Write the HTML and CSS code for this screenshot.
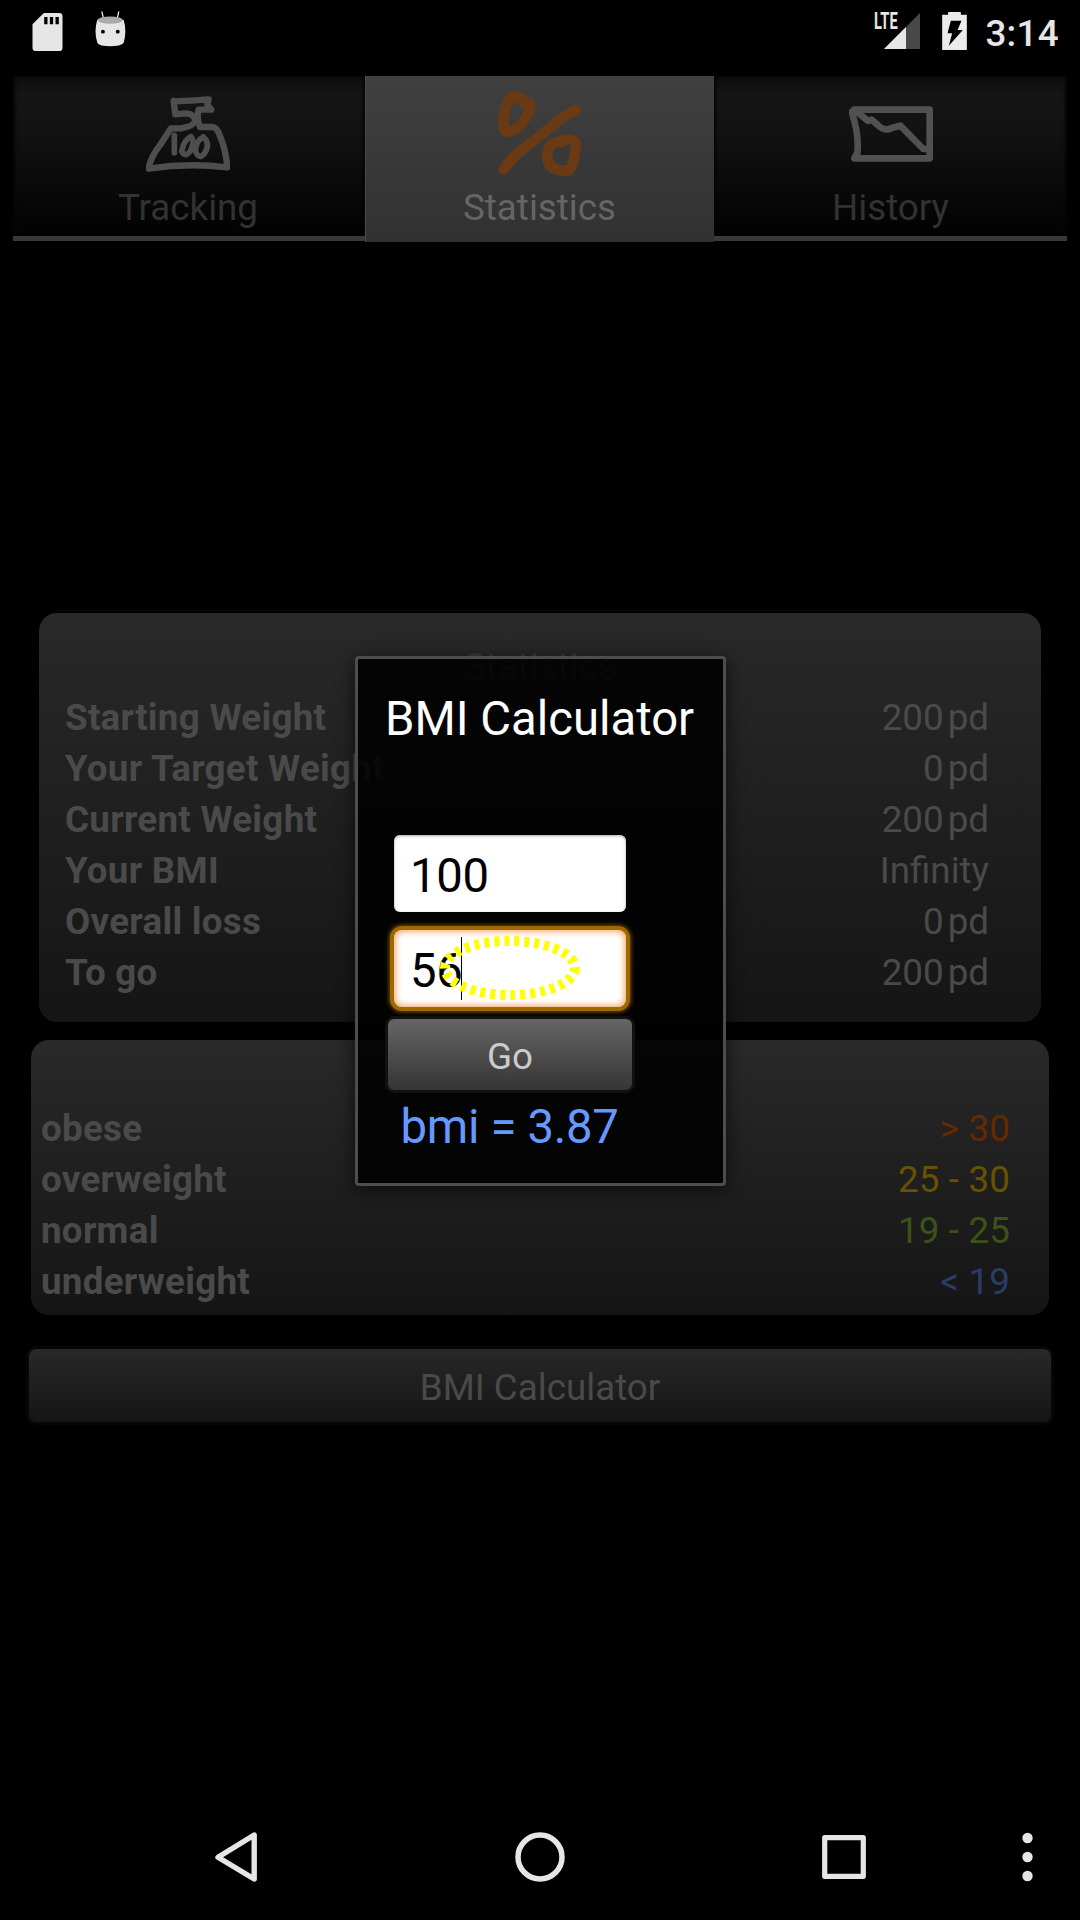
FILE: index.html
```html
<!DOCTYPE html>
<html lang="en">
<head>
<meta charset="utf-8">
<title>Statistics</title>
<link rel="stylesheet" href="styles.css">
</head>
<body>
<div class="screen">
  <header class="status-bar">
    <svg class="sd-icon" viewBox="0 0 90 114"><path fill="#e6e6e6" fill-rule="evenodd" d="M34 0H80Q90 0 90 10V104Q90 114 80 114H10Q0 114 0 104V34ZM35 12V34H45V12ZM52 12V34H62V12ZM69 12V34H79V12Z"/></svg>
    <svg class="droid-icon" viewBox="0 0 94 108"><path d="M21 2 26 24M72 2 67 24" stroke="#e6e6e6" stroke-width="4" stroke-linecap="round"/><path fill="#e6e6e6" d="M7 26Q46 40 87 26Q97 62 87 96Q84 101 72 104Q46 109 20 104Q9 101 7 96Q-4 60 7 26Z"/><ellipse cx="46" cy="27" rx="38" ry="11" fill="#aaa"/><circle cx="24" cy="62" r="6"/><circle cx="69" cy="62" r="6"/></svg>
    <span class="spacer"></span>
    <span class="signal"><svg viewBox="0 0 108 108"><path fill="#484848" d="M108 0V108H0Z"/><path fill="#e6e6e6" d="M66 42V108H0Z"/></svg><b class="lte">LTE</b></span>
    <svg class="battery" viewBox="0 0 74 114"><path fill="#ebebeb" d="M18 0H56V8H74V114H0V8H18Z"/><path d="M26 26H58L46 54H62L20 101 30 64H16Z"/></svg>
    <span class="clock">3:14</span>
  </header>

  <nav class="tabs">
    <div class="tab">
      <svg class="tab-icon" viewBox="0 0 252 252"><g fill="none" stroke="#4e4e4e" stroke-width="19" stroke-linecap="round" stroke-linejoin="round"><path d="M83 28Q135 27 188 22L184 38 196 53H158Q151 78 162 105H199Q213 105 221 130Q239 170 244 226Q125 212 8 230Q12 198 43 158Q60 132 75 109H104Q142 103 148 87Q145 65 118 64L88 67 83 27"/><path stroke-width="17" d="M85 130V182M135 134Q114 143 107 178Q117 198 132 178Q149 150 135 134M172 135Q151 144 148 177Q161 208 178 180Q193 154 172 135"/></g></svg>
      <span>Tracking</span>
    </div>
    <div class="tab selected">
      <svg class="tab-icon" viewBox="0 0 252 252"><path fill="none" stroke="#693a13" stroke-width="32" stroke-linecap="round" stroke-linejoin="round" d="M49 14Q31 14 22 54Q9 90 21 115Q32 125 50 113Q71 103 86 70Q105 38 91 33Q79 38 76 28Q67 15 49 14ZM17 232Q34 203 79 168L151 112Q190 74 234 54M207 143Q241 139 231 179Q228 216 213 235Q192 237 179 233Q144 224 148 181Q158 145 189 151Q195 139 207 143Z"/></svg>
      <span>Statistics</span>
    </div>
    <div class="tab">
      <svg class="tab-icon" viewBox="0 0 252 252"><path fill="none" stroke="#515151" stroke-width="20" stroke-linecap="round" stroke-linejoin="round" d="M16 53H242V199H16L25 183Q31 129 8 60L18 53 33 67 57 87 68 83 93 105Q109 118 128 108L154 101 223 171H239"/></svg>
      <span>History</span>
    </div>
  </nav>

  <main class="content">
    <section class="panel stats">
      <h2>Statistics</h2>
      <div class="row"><b>Starting Weight</b><span class="value">200<i>pd</i></span></div>
      <div class="row"><b>Your Target Weight</b><span class="value">0<i>pd</i></span></div>
      <div class="row"><b>Current Weight</b><span class="value">200<i>pd</i></span></div>
      <div class="row"><b>Your BMI</b><span class="value">Infinity</span></div>
      <div class="row"><b>Overall loss</b><span class="value">0<i>pd</i></span></div>
      <div class="row"><b>To go</b><span class="value">200<i>pd</i></span></div>
    </section>
    <section class="panel ranges">
      <div class="row"><b>obese</b><span class="obese">&gt; 30</span></div>
      <div class="row"><b>overweight</b><span class="over">25 - 30</span></div>
      <div class="row"><b>normal</b><span class="normal">19 - 25</span></div>
      <div class="row"><b>underweight</b><span class="under">&lt; 19</span></div>
    </section>
    <div class="wide-button">BMI Calculator</div>
  </main>

  <footer class="nav-bar">
    <svg class="nav-icons" viewBox="0 0 1080 120" fill="none" stroke="#e6e6e6" stroke-linejoin="round"><path stroke-width="5.4" d="M254.200 35V79L218 57.300Z"/><circle cx="540" cy="57" r="22" stroke-width="5.500"/><rect x="824.700" y="37.700" width="38.600" height="38.600" stroke-width="5.200"/><g fill="#e6e6e6" stroke="none"><circle cx="1027.500" cy="38" r="5.200"/><circle cx="1027.500" cy="57" r="5.200"/><circle cx="1027.500" cy="76" r="5.200"/></g></svg>
  </footer>

  <div class="dialog">
    <h1>BMI Calculator</h1>
    <div class="form">
      <div class="field">100</div>
      <div class="field focused">56<span class="caret"></span>
        <svg class="marker" viewBox="0 0 140 64"><ellipse cx="70" cy="32" rx="65" ry="27" fill="none" stroke="#ff0" stroke-width="10" stroke-dasharray="5 5"/></svg>
      </div>
      <div class="go">Go</div>
      <div class="result">bmi = 3.87</div>
    </div>
  </div>
</div>
</body>
</html>
```
FILE: styles.css
```css
* { box-sizing: border-box; }
body { margin: 0; background: #000; }
.screen {
  position: relative;
  display: flex;
  flex-direction: column;
  width: 1080px;
  height: 1920px;
  overflow: hidden;
  background: #000;
  font-family: Roboto, sans-serif;
  font-size: 36.75px;
  color: #4a4a4a;
}

/* Status bar */
.status-bar { display: flex; align-items: flex-start; height: 76px; padding: 11px 21px 0 32px; }
.sd-icon { width: 31px; height: 38px; margin-top: 2px; }
.droid-icon { width: 31px; height: 36px; margin-left: 32px; }
.spacer { flex: 1; }
.signal { position: relative; width: 36px; height: 36px; margin: 2px 22px 0 0; }
.signal svg { display: block; width: 36px; height: 36px; }
.lte {
  position: absolute;
  left: -10px;
  top: -1px;
  font-size: 23px;
  line-height: 20px;
  color: #e6e6e6;
  transform: scaleX(.64);
  transform-origin: 0 0;
}
.battery { width: 25px; height: 38px; margin-top: 1px; }
.clock { margin-left: 18px; font-weight: 500; line-height: 45px; letter-spacing: .3px; color: #e6e6e6; }

/* Tabs */
.tabs {
  display: grid;
  grid-template-columns: 352px 349px 353px;
  height: 166px;
  margin: 0 13px;
  background: linear-gradient(#393939, #393939) 0 160px / 100% 5px no-repeat;
}
.tab {
  display: flex;
  flex-direction: column;
  align-items: center;
  height: 160px;
  padding-top: 16px;
  background: linear-gradient(#0b0b0b, #151515 10%, #121212 35%, #020202);
  box-shadow: inset 3px 0 3px -1px #050505, inset -3px 0 3px -1px #050505;
  color: #323232;
}
.tab:first-child { padding-right: 2px; }
.tab.selected { height: 166px; background: linear-gradient(#404040, #313131); box-shadow: inset 1px 0 #4a4a4a; color: #656565; }
.tab-icon { width: 84px; height: 84px; }
.tab span { margin-top: 10px; line-height: 43px; }

/* Panels */
.content { display: flex; flex-direction: column; align-items: center; flex: 1; padding-top: 371px; }
.panel { border-radius: 18px; background: linear-gradient(#292929, #151515); line-height: 51px; }
.stats { width: 1002px; height: 409px; padding: 28px 52px 0 26px; }
.stats h2 { margin: 0 0 0 27px; font-size: inherit; font-weight: 400; text-align: center; color: #3a3a3a; }
.row { display: flex; justify-content: space-between; height: 51px; }
.row b { letter-spacing: .27px; }
.value i { margin-left: 4px; font-style: normal; }
.ranges { width: 1018px; height: 275px; margin-top: 18px; padding: 63px 39px 0 10px; }
.ranges span { letter-spacing: .15px; }
.obese { color: #662900; }
.over { color: #665200; }
.normal { color: #3d5217; }
.under { color: #293d66; }
.wide-button {
  width: 1022px;
  height: 73px;
  margin-top: 34px;
  border-radius: 7px;
  background: linear-gradient(#282828, #151515);
  box-shadow: 0 0 0 3px #060606;
  line-height: 78px;
  text-align: center;
}

/* Navigation */
.nav-bar { height: 120px; }
.nav-icons { display: block; width: 1080px; height: 120px; }

/* Dialog */
.dialog {
  position: absolute;
  left: 355px;
  top: 656px;
  width: 371px;
  height: 530px;
  padding: 33px 26px 0 27px;
  border: 3px solid #4d4d4d;
  border-radius: 4px;
  background: rgba(0, 0, 0, .88);
  box-shadow: 0 4px 18px rgba(0, 0, 0, .65);
}
.dialog h1 { margin: 0; font-size: 47.25px; font-weight: 400; line-height: 55px; color: #fff; white-space: nowrap; }
.form { width: 249px; padding-top: 88px; font-size: 47.25px; letter-spacing: -.3px; }
.field {
  position: relative;
  width: 232px;
  height: 77px;
  margin-left: 9px;
  padding-left: 16px;
  border-radius: 6px;
  background: #fff;
  box-shadow: inset 0 1px 3px #aaa;
  line-height: 82px;
  color: #000;
}
.field.focused {
  margin-top: 18px;
  border-radius: 8px;
  box-shadow: inset 0 0 7px 1px #ee9b4c, 0 0 0 4px #9e6900, 0 0 4px 5px #7a5000;
}
.caret { position: absolute; left: 67px; top: 7px; width: 1px; height: 63px; background: #000; }
.marker { position: absolute; left: 46px; top: 6px; width: 140px; height: 64px; }
.go {
  width: 244px;
  height: 71px;
  margin: 12px 0 0 3px;
  border-radius: 6px;
  background: linear-gradient(#656565, #353535);
  box-shadow: 0 0 0 3px #111;
  font-size: 36.75px;
  line-height: 76px;
  letter-spacing: 0;
  text-align: center;
  color: #ccc;
}
.result { margin-top: 10px; line-height: 55px; text-align: center; color: #69f; }
```
